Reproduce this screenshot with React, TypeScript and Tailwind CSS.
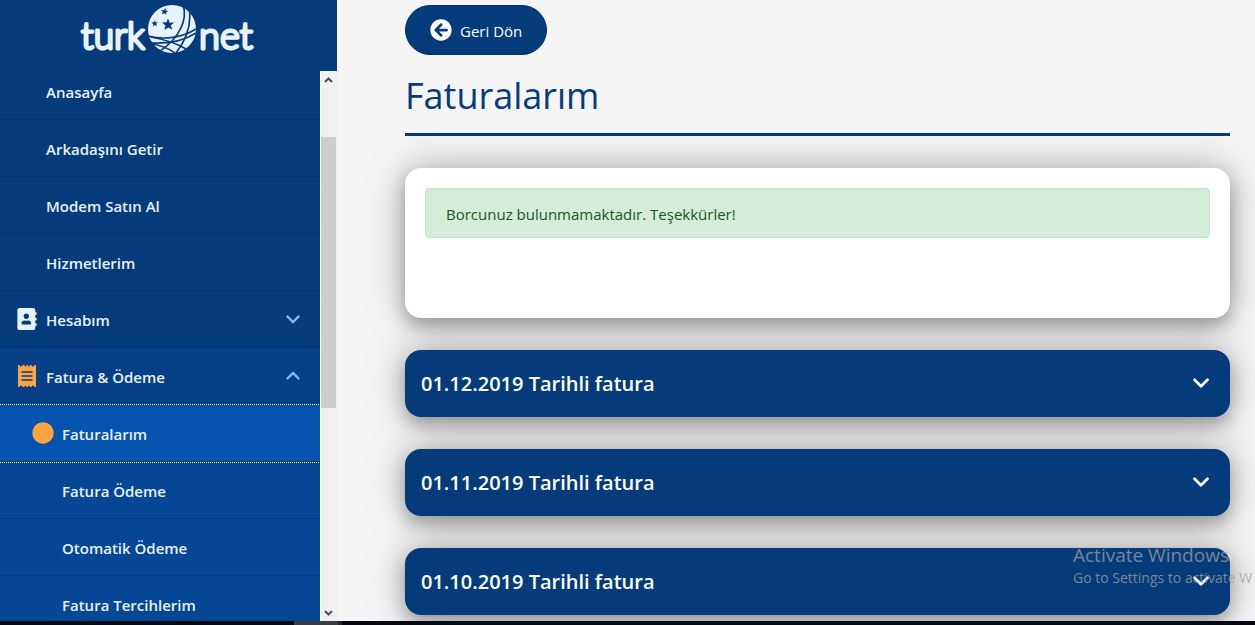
import { ChevronDown } from "lucide-react";
import { FaAddressBook, FaArrowCircleLeft, FaCircle } from "react-icons/fa";
import { MdKeyboardArrowDown, MdKeyboardArrowUp } from "react-icons/md";

const mainLinks = ["Anasayfa", "Arkadaşını Getir", "Modem Satın Al", "Hizmetlerim"];
const billingLinks = ["Fatura Ödeme", "Otomatik Ödeme", "Fatura Tercihlerim"];
const invoices = ["01.12.2019", "01.11.2019", "01.10.2019"];

function Globe() {
  return (
    <svg viewBox="0 0 48 48" className="h-12 w-12 shrink-0" aria-hidden="true">
      <circle cx="24" cy="24" r="24" fill="#e8f2fd" />
      <g fill="none" stroke="#053b7b" strokeWidth="1.7">
        <path d="M35.500 1C39 14 33 32 11 47" />
        <path d="M41.500 6C43 20 39 34 28 48" />
        <path d="M0 31C16 35 34 33 48 24" />
        <path d="M1 38C18 39 36 36 48 28" />
        <path d="M3 32C14 34 28 38 38 44" />
        <path d="M3 39C12 40 20 43 27 48" />
      </g>
      <g fill="#053b7b">
        <path d="M20 13.500l1.700 4.300 4.600-.4-3.500 3 1.500 4.400-4-2.400-3.900 2.500 1.100-4.500-3.600-2.900 4.600-.3z" />
        <path d="M17.500 3l.2 2.500 2.600.5-2.200 1.200.2 2.600-2-1.600-2.600 1.100 1.100-2.500-2-1.900 2.800.3z" />
        <path d="M7 15l.6 2.400 2.400-.2-1.800 1.600.8 2.400-2.100-1.200-2.100 1.400.5-2.500-2-1.500 2.600-.2z" />
      </g>
    </svg>
  );
}

function Receipt() {
  return (
    <svg viewBox="0 0 18 22" className="h-[22px] w-[18px]" aria-hidden="true">
      <path
        fill="#fca43f"
        d="M0 0h1.500a1.500 1.500 0 0 0 3 0h2a1 1.500 0 0 0 2 0h1.500a1 1.500 0 0 0 2 0h1.500a1.500 1.500 0 0 0 3 0h1.500v22h-1.500a1.500 1.500 0 0 0-3 0h-1.500a1 1.500 0 0 0-2 0h-1.500a1 1.500 0 0 0-2 0h-2a1.500 1.500 0 0 0-3 0h-1.500z"
      />
      <path stroke="#053f85" strokeWidth="1.500" d="M3.500 7h11M3.500 11h11M3.500 15h11" />
    </svg>
  );
}

function Sidebar() {
  return (
    <aside className="flex w-[337px] shrink-0 flex-col bg-[#053b7b] font-semibold text-[#e8f2fd]">
      <a href="#" aria-label="turk net" className="flex h-[71px] shrink-0 justify-center pt-[5px]">
        <svg viewBox="0 0 66 48" className="h-12 w-[66px] overflow-visible" aria-hidden="true">
          <text x="-1" y="44" fill="#e8f2fd" stroke="#e8f2fd" strokeWidth="3" strokeLinejoin="round" className="font-['Lato'] text-[37px] font-light">
            turk
          </text>
        </svg>
        <Globe />
        <svg viewBox="0 0 60 48" className="h-12 w-[60px] overflow-visible" aria-hidden="true">
          <text x="3" y="44" fill="#e8f2fd" stroke="#e8f2fd" strokeWidth="3" strokeLinejoin="round" className="font-['Lato'] text-[38px] font-light">
            net
          </text>
        </svg>
      </a>

      <div className="flex min-h-0 flex-1">
        <nav className="min-w-0 flex-1 overflow-hidden text-[15px]">
          <ul className="-mt-2">
            {mainLinks.map((label) => (
              <li key={label}>
                <a href="#" className="flex h-[57px] items-center border-b border-[#04336b] pt-0.5 pl-[46px]">
                  {label}
                </a>
              </li>
            ))}
            <li>
              <button type="button" className="flex h-[57px] w-full items-center border-b border-[#04336b] pr-[13px] pl-4">
                <FaAddressBook className="mr-2 w-[22px] shrink-0 text-[22px]" />
                <span className="flex-1 pt-0.5 text-left">Hesabım</span>
                <MdKeyboardArrowDown className="text-[28px] text-[#7cb5fb]" />
              </button>
            </li>
            <li>
              <button type="button" className="flex h-[57px] w-full items-center border-b border-[#04336b] bg-[#053f85] pr-[13px] pl-[18px]">
                <Receipt />
                <span className="ml-[10px] flex-1 pt-0.5 text-left">Fatura &amp; Ödeme</span>
                <MdKeyboardArrowUp className="text-[28px] text-[#7cb5fb]" />
              </button>
              <ul className="bg-[#054794]">
                <li>
                  <a
                    href="#"
                    aria-current="page"
                    className="relative flex h-[57px] items-center border-b border-[#043f86] bg-[#0653af] pl-8 outline-1 outline-white outline-dotted"
                  >
                    <FaCircle className="mr-2 text-[22px] text-[#fca43f]" />
                    <span className="pt-0.5">Faturalarım</span>
                  </a>
                </li>
                {billingLinks.map((label) => (
                  <li key={label}>
                    <a href="#" className="flex h-[57px] items-center border-b border-[#043b7c] pt-0.5 pl-[62px]">
                      {label}
                    </a>
                  </li>
                ))}
              </ul>
            </li>
          </ul>
        </nav>

        <div className="flex w-[17px] flex-col items-start border-l border-white bg-[#f0f0f0] text-[#505050]" aria-hidden="true">
          <svg viewBox="0 0 16 16" className="h-4 w-4">
            <path d="M4 11l3.500-3.500 3.500 3.500" fill="none" stroke="currentColor" strokeWidth="2" />
          </svg>
          <div className="mt-[50px] h-[271px] w-[15px] bg-[#cdcdcd]" />
          <svg viewBox="0 0 16 16" className="mt-auto h-4 w-4">
            <path d="M4 6l3.500 3.500 3.500-3.500" fill="none" stroke="currentColor" strokeWidth="2" />
          </svg>
        </div>
      </div>
    </aside>
  );
}

function InvoiceRow({ date }: { date: string }) {
  return (
    <button
      type="button"
      className="flex h-[67px] w-full shrink-0 items-center justify-between rounded-2xl bg-[#053b7b] pr-4 pb-0.5 pl-4 text-[20px] font-semibold text-white shadow-[0_8px_16px_rgba(0,0,0,0.25),0_0_40px_rgba(0,0,0,0.3)]"
    >
      <span className="pt-0.5">{date} Tarihli fatura</span>
      <ChevronDown size={26} strokeWidth={2.5} />
    </button>
  );
}

export default function App() {
  return (
    <div className="flex h-screen flex-col overflow-hidden bg-[#f5f5f5] font-['Open_Sans','Noto_Sans',sans-serif]">
      <div className="flex min-h-0 flex-1">
        <Sidebar />

        <main className="relative min-w-0 flex-1 overflow-hidden pt-[5px] pr-[25px] pl-[68px] text-[15px]">
          <button
            type="button"
            className="flex h-[50px] items-center gap-2 rounded-full border border-[#04336b] bg-[#053b7b] px-6 text-white"
          >
            <FaArrowCircleLeft className="text-[22px]" />
            <span className="pt-0.5">Geri Dön</span>
          </button>
          <h1 className="mt-3 border-b-3 border-[#053b7b] pb-2 text-[36px] leading-[58px] text-[#053b7b]">Faturalarım</h1>

          <div className="mt-8 flex flex-col gap-8">
            <section className="h-[150px] rounded-2xl bg-white p-5 shadow-[0_8px_16px_rgba(0,0,0,0.25),0_0_40px_rgba(0,0,0,0.3)]">
              <p className="flex h-[50px] items-center rounded border border-[#c3e6cb] bg-[#d4edda] px-5 pt-0.5 text-[#155724]">
                Borcunuz bulunmamaktadır. Teşekkürler!
              </p>
            </section>
            {invoices.map((date) => (
              <InvoiceRow key={date} date={date} />
            ))}
          </div>

          <div className="pointer-events-none absolute right-0 bottom-8 w-[182px] overflow-hidden whitespace-nowrap text-[#a0a0a0]/75">
            <p className="text-[19px] leading-6">Activate Windows</p>
            <p className="text-[14px] leading-[22px]">Go to Settings to activate W</p>
          </div>
        </main>
      </div>

      <footer className="flex h-1 shrink-0 bg-[#050a12]">
        <div className="ml-[294px] w-11 bg-[#3a3e43]" />
        <div className="w-1 bg-[#23272b]" />
      </footer>
    </div>
  );
}
